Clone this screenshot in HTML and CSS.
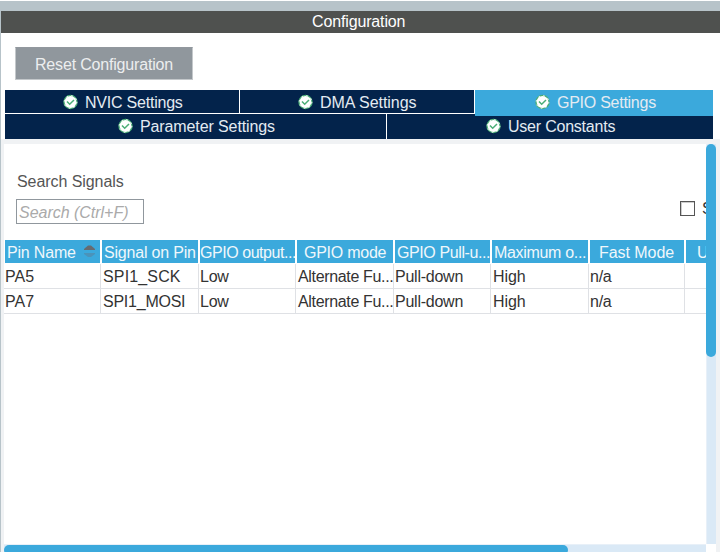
FILE: index.html
```html
<!DOCTYPE html>
<html lang="en">
<head>
<meta charset="utf-8">
<title>Configuration</title>
<link rel="stylesheet" href="styles.css">
</head>
<body>
<svg class="defs" width="0" height="0">
  <symbol id="ok" viewBox="0 0 16 16">
    <circle cx="8.500" cy="8" r="7.200" fill="#4bae76"/>
    <circle cx="8.500" cy="8" r="5.900" fill="#fff"/>
    <circle cx="8.500" cy="8" r="6.300" fill="none" stroke="#fff" stroke-width="1" stroke-dasharray="1.600 3.350"/>
    <path d="M5 7.500 7.700 10.200 12 6" fill="none" stroke="#4bae76" stroke-width="1.500"/>
  </symbol>
</svg>
<div class="window">
  <header class="title"><span>Configuration</span></header>
  <div class="toolbar"><button class="reset">Reset Configuration</button></div>
  <nav class="tabs">
    <div class="tab-row first">
      <div class="tab nvic"><svg class="ok"><use href="#ok"/></svg><span>NVIC Settings</span></div>
      <div class="tab dma"><svg class="ok"><use href="#ok"/></svg><span>DMA Settings</span></div>
      <div class="tab gpio"><svg class="ok"><use href="#ok"/></svg><span>GPIO Settings</span></div>
    </div>
    <div class="tab-row second">
      <div class="tab param"><svg class="ok"><use href="#ok"/></svg><span>Parameter Settings</span></div>
      <div class="tab user"><svg class="ok"><use href="#ok"/></svg><span>User Constants</span></div>
    </div>
  </nav>
  <main class="panel">
    <section class="view">
      <div class="filters">
        <div class="search">
          <label class="label">Search Signals</label>
          <div class="field">Search (Ctrl+F)</div>
        </div>
        <div class="check"><i class="box"></i><span>S</span></div>
      </div>
      <div class="grid head">
        <div class="pin"><span>Pin Name</span><svg class="sort" width="11" height="13" viewBox="0 0 11 13"><path d="M0 5V4L4 .5H7L11 4V5Z" fill="#666b70"/><path d="M0 8H11V9L7 12H4L0 9Z" fill="#4b93b9"/></svg></div>
        <div class="sig">Signal on Pin</div>
        <div class="out">GPIO output...</div>
        <div class="mode">GPIO mode</div>
        <div class="pull">GPIO Pull-u...</div>
        <div class="max">Maximum o...</div>
        <div class="fast">Fast Mode</div>
        <div class="label-col">U</div>
      </div>
      <div class="grid row">
        <div>PA5</div><div class="sck">SPI1_SCK</div><div>Low</div><div class="alt">Alternate Fu...</div><div>Pull-down</div><div>High</div><div>n/a</div><div></div>
      </div>
      <div class="grid row">
        <div>PA7</div><div>SPI1_MOSI</div><div>Low</div><div class="alt">Alternate Fu...</div><div>Pull-down</div><div>High</div><div>n/a</div><div></div>
      </div>
    </section>
    <div class="vbar"><div class="vthumb"></div></div>
    <div class="hbar"><div class="hthumb"></div></div>
    <div class="corner"></div>
  </main>
</div>
</body>
</html>
```
FILE: styles.css
```css
* { box-sizing: border-box; }
body {
  margin: 0;
  background: #fff;
  font: 16px/20px "Liberation Sans", Arial, sans-serif;
  color: #333;
  overflow: hidden;
}
.defs { display: block; }
.window {
  width: 720px;
  height: 551px;
  margin-top: 1px;
  border-left: 1px solid #b7c3c9;
  border-top: 10px solid #b7c3c9;
  display: flex;
  flex-direction: column;
}
.title {
  height: 22px;
  flex: none;
  background: #4f514f;
  color: #fff;
  padding: 1px 0 0 311px;
  letter-spacing: -.14px;
}
.toolbar { height: 57px; flex: none; padding: 14px 0 0 14px; }
.reset {
  display: block;
  width: 178px;
  height: 33px;
  padding: 2px 0 0 19px;
  border: 1px solid #c4c8cb;
  border-top-color: #92989e;
  background: #90979d;
  color: #eceeef;
  font: inherit;
  letter-spacing: -.18px;
  text-align: left;
  white-space: nowrap;
}
.tabs { width: 708px; height: 49px; margin-left: 4px; flex: none; color: #e4ebf2; letter-spacing: -.22px; }
.tab-row { display: flex; white-space: nowrap; }
.first { height: 24px; }
.second { height: 25px; }
.tab { display: flex; background: #03234b; padding-top: 3px; }
.ok { width: 16px; height: 16px; margin: 1px 7px 0 0; flex: none; }
.nvic, .dma { width: 235px; height: 24px; padding-left: 57px; border-bottom: 1px solid #fff; border-right: 1px solid #fff; }
.dma { letter-spacing: -.03px; }
.gpio { width: 238px; height: 26px; padding-left: 59px; background: #3ba9dc; letter-spacing: -.26px; position: relative; z-index: 1; }
.param { width: 382px; padding-left: 112px; border-right: 1px solid #fff; letter-spacing: -.11px; }
.user { width: 326px; padding-left: 98px; }
.panel {
  flex: 1;
  min-height: 0;
  background: #f0f2f4;
  padding: 5px 4px 0 3px;
  display: grid;
  grid-template-columns: 702px 10px;
  grid-template-rows: 400px 8px;
}
.view { background: #fff; overflow: hidden; }
.filters { height: 96px; display: flex; justify-content: space-between; }
.search { padding: 28px 0 0 12px; }
.label { display: block; height: 27px; padding-left: 1px; color: #555; letter-spacing: -.07px; }
.field {
  width: 128px;
  height: 25px;
  padding: 3px 0 0 2px;
  border: 1px solid #90979d;
  color: #aaa;
  font-style: italic;
  letter-spacing: -.02px;
  white-space: nowrap;
}
.check { width: 26px; padding-top: 55px; display: flex; gap: 7px; white-space: nowrap; overflow: hidden; }
.box { width: 15px; height: 15px; margin-top: 2px; border: 1px solid #555; box-shadow: inset 1px 1px #ccc; flex: none; }
.grid { display: grid; grid-template-columns: 97px 98px 97px 98px 97px 98px 96px 98px; white-space: nowrap; }
.head { height: 24px; color: #eff7fb; letter-spacing: -.25px; }
.head > div { height: 23px; background: #3ba9dc; border: solid #fff; border-width: 0 1px; padding-top: 3px; overflow: hidden; }
.head .pin { display: flex; padding-left: 2px; letter-spacing: -.18px; }
.sort { margin: 2px 0 0 8px; }
.head .sig { padding-left: 2px; letter-spacing: -.2px; }
.head .out { letter-spacing: -.45px; }
.head .mode { padding-left: 7px; }
.head .pull { padding-left: 2px; letter-spacing: -.4px; }
.head .max { padding-left: 2px; letter-spacing: -.32px; }
.head .fast { padding-left: 9px; letter-spacing: -.05px; }
.head .label-col { padding-left: 11px; }
.row { height: 25px; letter-spacing: -.24px; }
.row > div { border: solid #dfe1e5; border-width: 0 1px 1px 0; padding: 3px 0 0 1px; overflow: hidden; }
.row > div:nth-child(1) { letter-spacing: 0; }
.row > div:nth-child(2), .row > div:nth-child(4), .row > div:nth-child(6) { padding-left: 2px; }
.row > div:nth-child(6) { letter-spacing: -.1px; }
.row > .sck { letter-spacing: .15px; }
.row > .alt { letter-spacing: -.34px; }
.vbar { background: #dae9f6; border-left: 1px solid #e8f0f8; }
.vthumb { width: 10px; height: 213px; margin-left: -1px; background: #3ba9dc; border-radius: 5px; }
.hbar { background: #dae9f6; border-top: 1px solid #e8f0f8; overflow: hidden; }
.hthumb { width: 564px; height: 10px; background: #3ba9dc; border-radius: 5px; }
.corner { background: #fff; }
```
